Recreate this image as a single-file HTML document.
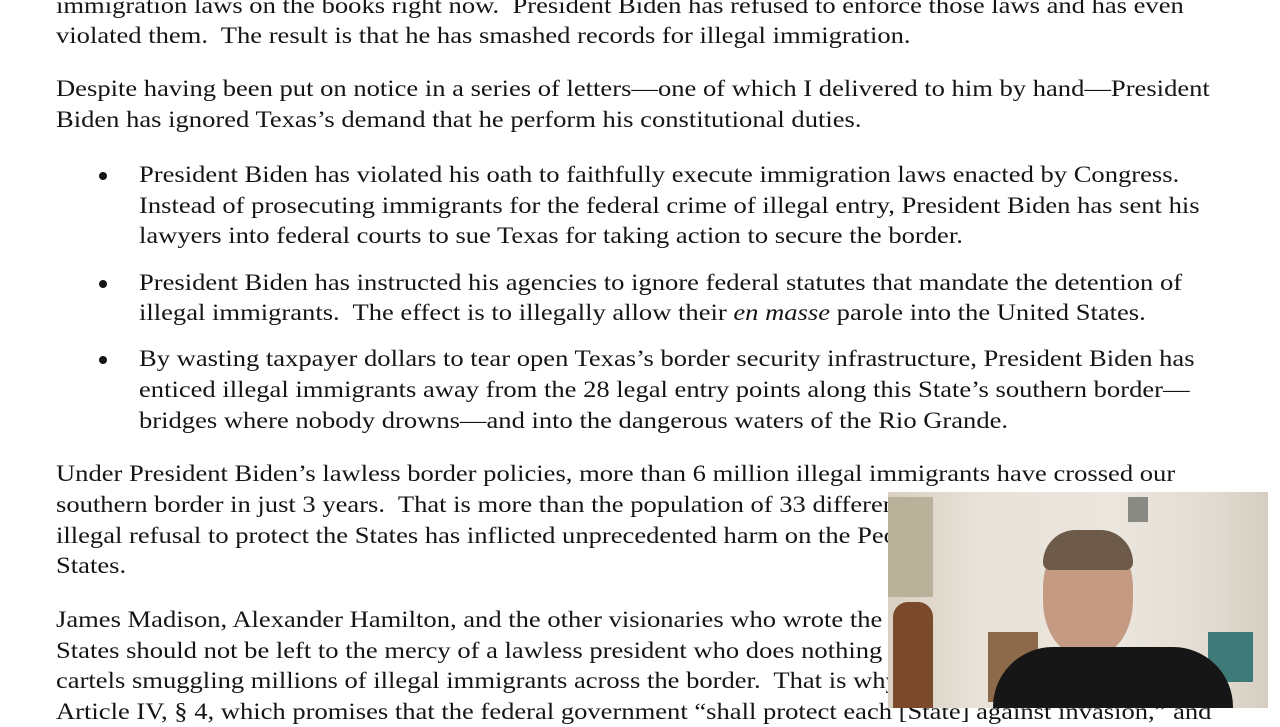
<!DOCTYPE html>
<html><head><meta charset="utf-8"><style>
body{margin:0;width:1280px;height:720px;overflow:hidden;background:#fff;position:relative;font-family:"Liberation Serif",serif;font-size:23px;color:#151515}
.l{position:absolute;white-space:nowrap;line-height:30px;left:56px;transform:scaleX(1.155);transform-origin:0 0;margin-top:1px}
.b{left:139px}
.d{position:absolute;left:99px;width:8px;height:8px;border-radius:50%;background:#151515;margin-top:1px}
#v{position:absolute;left:888px;top:492px;width:380px;height:216px;overflow:hidden;background:linear-gradient(90deg,#d9cfc2 0%,#e8e2d8 25%,#ebe6de 60%,#e2dbd0 85%,#d6cec2 100%)}
</style></head><body>
<div class="l" style="top:-10px">immigration laws on the books right now.&nbsp; President Biden has refused to enforce those laws and has even</div>
<div class="l" style="top:20px">violated them.&nbsp; The result is that he has smashed records for illegal immigration.</div>
<div class="l" style="top:73px">Despite having been put on notice in a series of letters—one of which I delivered to him by hand—President</div>
<div class="l" style="top:104px">Biden has ignored Texas’s demand that he perform his constitutional duties.</div>
<div class="d" style="top:171px"></div>
<div class="l b" style="top:159px">President Biden has violated his oath to faithfully execute immigration laws enacted by Congress.</div>
<div class="l b" style="top:190px">Instead of prosecuting immigrants for the federal crime of illegal entry, President Biden has sent his</div>
<div class="l b" style="top:220px">lawyers into federal courts to sue Texas for taking action to secure the border.</div>
<div class="d" style="top:279px"></div>
<div class="l b" style="top:267px">President Biden has instructed his agencies to ignore federal statutes that mandate the detention of</div>
<div class="l b" style="top:297px">illegal immigrants.&nbsp; The effect is to illegally allow their <i>en masse</i> parole into the United States.</div>
<div class="d" style="top:355px"></div>
<div class="l b" style="top:343px">By wasting taxpayer dollars to tear open Texas’s border security infrastructure, President Biden has</div>
<div class="l b" style="top:374px">enticed illegal immigrants away from the 28 legal entry points along this State’s southern border—</div>
<div class="l b" style="top:405px">bridges where nobody drowns—and into the dangerous waters of the Rio Grande.</div>
<div class="l" style="top:458px">Under President Biden’s lawless border policies, more than 6 million illegal immigrants have crossed our</div>
<div class="l" style="top:489px">southern border in just 3 years.&nbsp; That is more than the population of 33 different States.&nbsp; The</div>
<div class="l" style="top:520px">illegal refusal to protect the States has inflicted unprecedented harm on the People of the United</div>
<div class="l" style="top:550px">States.</div>
<div class="l" style="top:604px">James Madison, Alexander Hamilton, and the other visionaries who wrote the Constitution</div>
<div class="l" style="top:635px">States should not be left to the mercy of a lawless president who does nothing to stop</div>
<div class="l" style="top:665px">cartels smuggling millions of illegal immigrants across the border.&nbsp; That is why the</div>
<div class="l" style="top:696px">Article IV, § 4, which promises that the federal government “shall protect each [State] against invasion,” and</div>
<div id="v">
<div style="position:absolute;left:0;top:5px;width:45px;height:100px;background:#b9b29a"></div>
<div style="position:absolute;left:5px;top:110px;width:40px;height:106px;background:#7a4a2a;border-radius:15px 15px 0 0"></div>
<div style="position:absolute;left:240px;top:5px;width:20px;height:25px;background:#8a8a84"></div>
<div style="position:absolute;left:100px;top:140px;width:50px;height:70px;background:#8c6a4a"></div>
<div style="position:absolute;left:320px;top:140px;width:45px;height:50px;background:#3e7a78"></div>
<div style="position:absolute;left:155px;top:40px;width:90px;height:125px;background:#c49a82;border-radius:45%"></div>
<div style="position:absolute;left:155px;top:38px;width:90px;height:40px;background:#6e5a48;border-radius:45px 45px 10px 10px"></div>
<div style="position:absolute;left:105px;top:155px;width:240px;height:80px;background:#161616;border-radius:60px 60px 0 0"></div>
</div>
</body></html>
